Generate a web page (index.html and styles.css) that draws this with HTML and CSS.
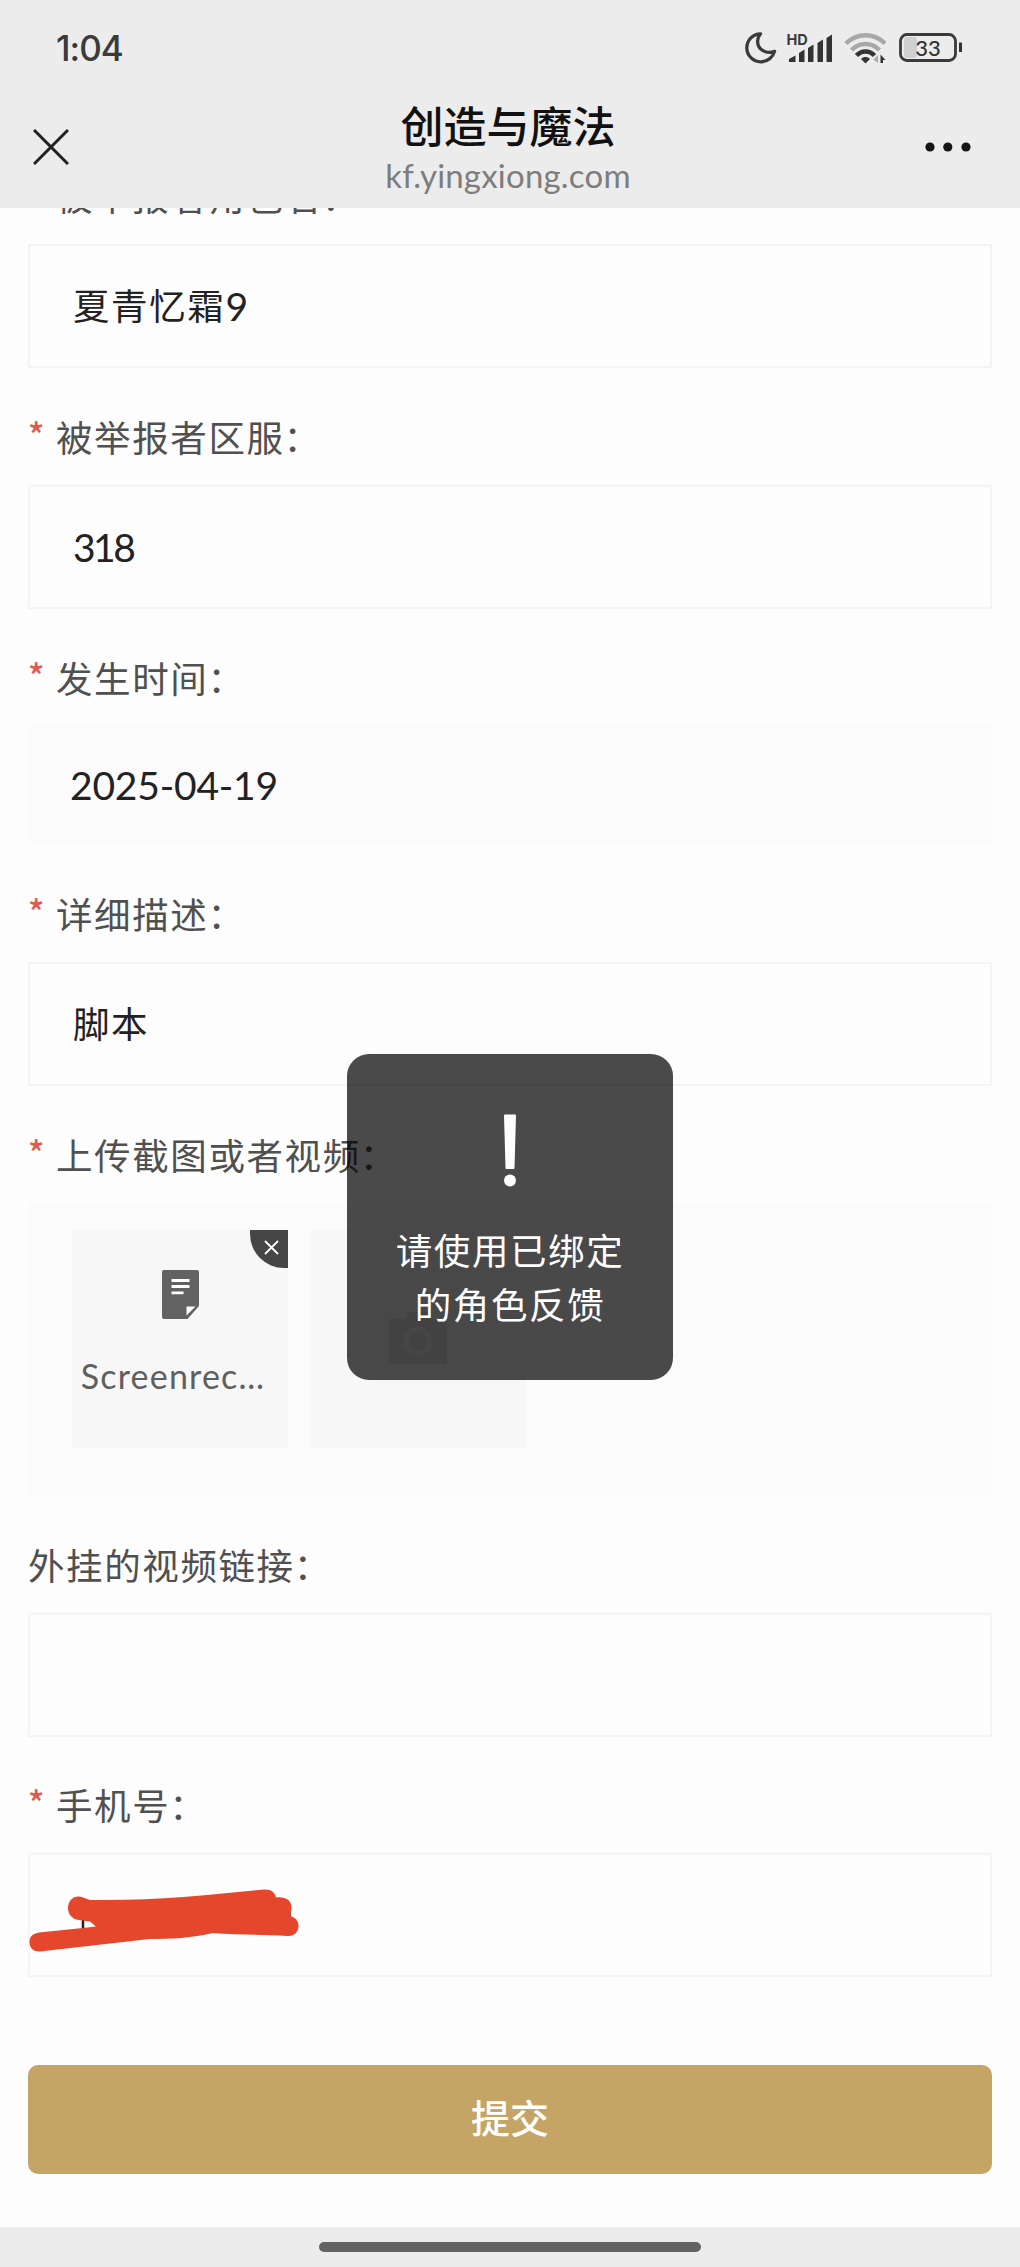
FILE: index.html
```html
<!DOCTYPE html>
<html lang="zh-CN">
<head>
  <meta charset="UTF-8" />
  <title>创造与魔法</title>
  <meta name="viewport" content="width=device-width, initial-scale=1.0" />
  <link rel="stylesheet" href="styles.css">
</head>
<body>

<header class="top">
  <div class="status-bar">
    <span class="time">1:04</span>
    <div class="status-icons">
      <svg class="moon" width="32" height="32" viewBox="0 0 32 32">
        <path d="M15.500 1.800C7.500 2 1.800 8.200 1.800 15.800a14 14 0 0 0 14 14c6.500 0 12-4.300 13.800-10.400-8.500 3-17-1.800-17-10.200 0-2.800 1.100-5.200 2.900-7.400z" fill="none" stroke="#3a3a3a" stroke-width="3.300" stroke-linejoin="round"/>
      </svg>
      <svg class="signal" width="46" height="32" viewBox="0 0 46 32">
        <text x="-.5" y="13" class="hd-text">HD</text>
        <g fill="#333">
          <path d="M2 30v-3l6.500-3.500V30z"/>
          <path d="M12 30V21l5.500-3.500V30z"/>
          <path d="M21 30V16l5.500-3.500V30z"/>
          <path d="M30.500 30V11l5.500-3.500V30z"/>
          <path d="M39.500 30V6L45 2.500V30z"/>
        </g>
      </svg>
      <svg class="wifi" width="43" height="32" viewBox="0 0 43 32">
        <g fill="none" stroke-width="4.500">
          <path d="M2 11.500C13 .5 30 .5 41 11.500" stroke="#a8a8a8"/>
          <path d="M7.500 18c8-8 20-8 28 0" stroke="#a8a8a8"/>
          <path d="M12.500 23.500c5-5.500 13-5.500 18 0" stroke="#333"/>
        </g>
        <path d="M17 27c2.600-2.600 6.400-2.600 9 0L21.500 31.500z" fill="#333"/>
        <path d="M34 23v8l-4.500-3.500z" fill="#aaa"/>
        <path d="M36.500 31v-8.500l5 5.500h-2.500v3z" fill="#333"/>
      </svg>
      <svg class="battery" width="64" height="30" viewBox="0 0 64 30">
        <rect x="5" y="4" width="13" height="21" rx="3" fill="#cfcfcf"/>
        <rect x="1.500" y="1.500" width="55" height="26" rx="6.500" fill="none" stroke="#3a3a3a" stroke-width="2.800"/>
        <rect x="60" y="9.500" width="3" height="9.500" fill="#333"/>
        <text x="29" y="22.500" text-anchor="middle" class="battery-text">33</text>
      </svg>
    </div>
  </div>
  <div class="nav-bar">
    <svg class="close" width="36" height="36" viewBox="0 0 36 36">
      <path d="M1 1l34 34M35 1L1 35" stroke="#222" stroke-width="3"/>
    </svg>
    <div class="nav-title">
      <h1>创造与魔法</h1>
      <p>kf.yingxiong.com</p>
    </div>
    <svg class="more" width="46" height="10" viewBox="0 0 46 10">
      <circle cx="5" cy="5" r="4.600"/>
      <circle cx="22.800" cy="5" r="4.600"/>
      <circle cx="41" cy="5" r="4.600"/>
    </svg>
  </div>
</header>

<main class="page">
  <form class="report-form">
    <div class="label"><i>*</i>被举报者角色名<span class="colon">：</span></div>
    <div class="input">夏青忆霜<span class="num">9</span></div>

    <div class="label"><i>*</i>被举报者区服<span class="colon">：</span></div>
    <div class="input"><span class="num">318</span></div>

    <div class="label label-date"><i>*</i>发生时间<span class="colon">：</span></div>
    <div class="date"><span class="num">2025-04-19</span></div>

    <div class="label label-desc"><i>*</i>详细描述<span class="colon">：</span></div>
    <div class="input">脚本</div>

    <div class="label"><i>*</i>上传截图或者视频<span class="colon">：</span></div>
    <div class="upload">
      <div class="tile">
        <span class="remove">
          <svg width="15" height="15" viewBox="0 0 15 15">
            <path d="M1 1l13 13M14 1L1 14" stroke="#fff" stroke-width="1.800"/>
          </svg>
        </span>
        <svg class="file-icon" width="37" height="49" viewBox="0 0 37 49">
          <path d="M2 0h33a2 2 0 0 1 2 2v34L25.500 49H2a2 2 0 0 1-2-2V2a2 2 0 0 1 2-2z" fill="#626262"/>
          <path d="M24.500 36.500h9l-9 9z" fill="#fafafa"/>
          <path d="M9.500 10.500h18M9.500 16.500h18M9.500 22.800h12" stroke="#fff" stroke-width="2.800"/>
        </svg>
        <span class="file-name">Screenrec…</span>
      </div>
      <div class="tile tile-add">
        <svg width="58" height="52" viewBox="0 0 58 52">
          <path d="M0 7h16l4-7h18l4 7h16v45H0z" fill="#e2e2e2"/>
          <circle cx="29" cy="29" r="12" fill="none" stroke="#f2f2f2" stroke-width="5"/>
        </svg>
      </div>
    </div>

    <div class="label label-link">外挂的视频链接<span class="colon">：</span></div>
    <div class="input"></div>

    <div class="label label-phone"><i>*</i>手机号<span class="colon">：</span></div>
    <div class="input phone">
      <svg class="scribble" width="272" height="64" viewBox="0 0 272 64">
        <path d="M54 28v12M260.500 20v10" stroke="#222" stroke-width="2.500"/>
        <path d="M10 43.500L54 39 67 37.500 61 32.500 50 31C43 30.500 39 25 39 19c0-7 5-12 11-11.500 4 .4 7 2.500 11 3.500 65 1 120-5 174-10.500 7-.5 11 3 12 8 9-1 15.500 2.500 15.500 10 0 3.500-1 6-1.500 8.500 5 1.200 9 5 8.500 10.500-.5 6-5 10-11 9.500-24-1.500-50-1-75-3-20 5-42 6-63 6L11 62.500C4 63 .5 58.500.5 53S4 44.500 10 43.500z" fill="#e4472b"/>
      </svg>
    </div>

    <button type="button" class="submit">提交</button>
  </form>
</main>

<footer class="home-bar"><span></span></footer>

<div class="toast">
  <svg width="14" height="74" viewBox="0 0 14 74">
    <path d="M1 1.500Q1 .5 2 .5h10q1 0 1 1L11.500 54q0 1-1 1h-7q-1 0-1-1z" fill="#fff"/>
    <circle cx="7" cy="66.500" r="6" fill="#fff"/>
  </svg>
  <p>请使用已绑定<br>的角色反馈</p>
</div>

</body>
</html>
```

FILE: styles.css
```css
* {
  box-sizing: border-box;
}
body {
  margin: 0;
  width: 1020px;
  height: 2267px;
  display: flex;
  flex-direction: column;
  position: relative;
  overflow: hidden;
  background: #fdfdfd;
  color: #222;
  font-family: "Noto Sans CJK SC", sans-serif;
}
h1, p {
  margin: 0;
}

/* status bar + title bar */
.top {
  height: 208px;
  flex-shrink: 0;
  background: #ececec;
}
.status-bar {
  height: 96px;
  padding: 0 57px 0 56px;
  display: flex;
  align-items: center;
  justify-content: space-between;
}
.time {
  font: 500 35px/42px Inter, sans-serif;
  letter-spacing: -1px;
  color: #3a3a3a;
}
.status-icons {
  display: flex;
  align-items: center;
}
.signal {
  margin-left: 10px;
}
.wifi {
  margin-left: 11px;
}
.battery {
  margin-left: 12px;
}
.hd-text {
  font: 700 14.500px Inter, sans-serif;
  fill: #3a3a3a;
}
.battery-text {
  font: 500 22px Lato, sans-serif;
  fill: #333;
}
.nav-bar {
  height: 100px;
  padding: 1px 49px 0 33px;
  display: flex;
  align-items: center;
  justify-content: space-between;
}
.nav-title {
  width: 400px;
  margin-left: 22px;
  text-align: center;
}
.nav-title h1 {
  font-size: 43px;
  line-height: 56px;
  font-weight: 500;
  color: #111;
}
.nav-title p {
  font: 33px/46px Lato, sans-serif;
  letter-spacing: 0.200px;
  color: #7d7d7d;
}
.more {
  fill: #161616;
}

/* form, scrolled a little under the header */
.page {
  height: 2019px;
  flex-shrink: 0;
  overflow: hidden;
}
.report-form {
  margin-top: -81px;
  padding: 0 28px;
}
.label {
  height: 117px;
  padding-top: 44px;
  display: flex;
  font-size: 36.5px;
  line-height: 50px;
  letter-spacing: 1.600px;
  color: #505050;
}
.label i {
  width: 28px;
  font: 500 34px/44px "Noto Sans CJK SC", sans-serif;
  color: #dd5b52;
}
.colon {
  margin-left: -1px;
}
.label-date {
  height: 115px;
}
.label-desc {
  height: 119px;
  padding-top: 46px;
}
.label-link,
.label-phone {
  height: 116px;
  padding-top: 43px;
}
.input {
  height: 124px;
  padding: 0 43px 3px;
  display: flex;
  align-items: center;
  border: 2px solid #f4f4f4;
  font-size: 36.5px;
  letter-spacing: 1.600px;
}
.num {
  font: 39px/50px Lato, sans-serif;
}
.input .num {
  padding-top: 2px;
  letter-spacing: -2.500px;
}
.date {
  height: 119px;
  padding: 2px 42px 0;
  display: flex;
  align-items: center;
  background: #fbfbfb;
}
.date .num {
  letter-spacing: -0.200px;
}
.upload {
  height: 294px;
  padding: 27px 44px;
  display: flex;
  gap: 22px;
  background: #fbfbfb;
}
.tile {
  width: 216px;
  height: 218px;
  padding-top: 40px;
  position: relative;
  display: flex;
  flex-direction: column;
  align-items: center;
  background: #f7f7f7;
}
.tile-add {
  padding-top: 82px;
}
.remove {
  position: absolute;
  top: 0;
  right: 0;
  width: 38px;
  height: 38px;
  padding: 10px 0 0 14px;
  line-height: 0;
  background: #464646;
  border-bottom-left-radius: 34px;
}
.file-name {
  margin: 35px 14px 0 0;
  font: 34px/44px Lato, sans-serif;
  letter-spacing: 1.200px;
  color: #5f5f5f;
}
.phone {
  position: relative;
}
.scribble {
  position: absolute;
  left: -1px;
  top: 34px;
}
.submit {
  width: 100%;
  height: 109px;
  margin-top: 88px;
  padding: 0 0 7px;
  border: none;
  border-radius: 10px;
  background: #c5a566;
  color: #fff;
  font: 500 39px "Noto Sans CJK SC", sans-serif;
}

.home-bar {
  height: 40px;
  flex-shrink: 0;
  padding-top: 15px;
  background: #ececec;
}
.home-bar span {
  display: block;
  width: 382px;
  height: 10px;
  margin: 0 auto;
  border-radius: 5px;
  background: #636363;
}

.toast {
  position: absolute;
  left: 347px;
  top: 1054px;
  width: 326px;
  height: 326px;
  padding-top: 60px;
  border-radius: 22px;
  background: rgba(0, 0, 0, 0.71);
  color: #fff;
  text-align: center;
}
.toast svg {
  display: block;
  margin: 0 auto;
}
.toast p {
  margin-top: 35px;
  font-size: 36.5px;
  line-height: 54px;
  letter-spacing: 1.600px;
}
```
